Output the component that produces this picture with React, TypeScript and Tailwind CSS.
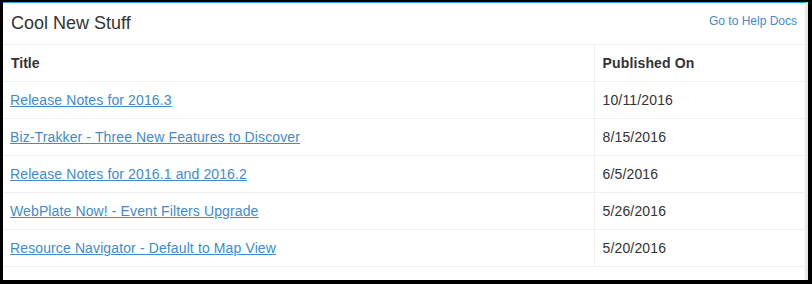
import React from "react";

const rows = [
  ["Release Notes for 2016.3", "10/11/2016"],
  ["Biz-Trakker - Three New Features to Discover", "8/15/2016"],
  ["Release Notes for 2016.1 and 2016.2", "6/5/2016"],
  ["WebPlate Now! - Event Filters Upgrade", "5/26/2016"],
  ["Resource Navigator - Default to Map View", "5/20/2016"],
];

export default function App() {
  return (
    <div
      className="w-[812px] h-[284px] bg-black pt-[2px] pl-[3px] pr-[4px] pb-[4px] text-[#333]"
      style={{ fontFamily: '"Liberation Sans", Arial, sans-serif' }}
    >
      <div className="h-full bg-white border-t border-t-[#29a8e0] border-r-[3px] border-r-[#e8e8e8] flex flex-col">
        <div className="h-[42px] border-b border-[#f0f0f0] flex items-start justify-between pl-2 pr-2 shrink-0">
          <div className="mt-[10px] text-[18px] leading-[20px]">Cool New Stuff</div>
          <a href="#" className="mt-[10px] text-[12px] leading-[17px] text-[#428bca]">
            Go to Help Docs
          </a>
        </div>
        <table className="w-full border-collapse text-[14px] leading-[20px]">
          <thead>
            <tr className="border-b border-[#f0f0f0]">
              <th className="w-[591px] h-[36px] px-2 py-2 text-left font-bold border-r border-[#f0f0f0]">
                Title
              </th>
              <th className="px-2 py-2 text-left font-bold tracking-[0.15px]">Published On</th>
            </tr>
          </thead>
          <tbody>
            {rows.map(([t, d]) => (
              <tr key={t} className="border-b border-[#f0f0f0]">
                <td className="h-[36px] pl-[7px] pr-2 py-2 border-r border-[#f0f0f0]">
                  <a href="#" className="text-[#428bca] underline tracking-[0.12px]">
                    {t}
                  </a>
                </td>
                <td className="px-2 py-2 tracking-[0.15px]">{d}</td>
              </tr>
            ))}
          </tbody>
        </table>
      </div>
    </div>
  );
}
